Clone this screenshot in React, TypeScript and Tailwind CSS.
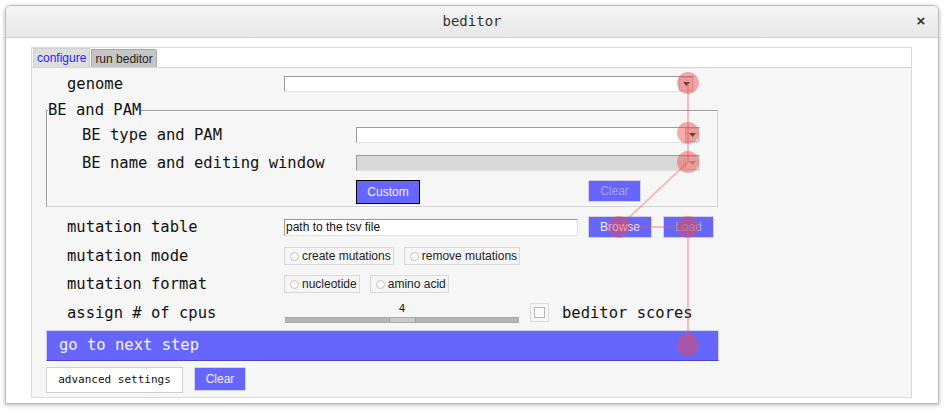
import React from "react";

const mono = "font-['DejaVu_Sans_Mono',monospace]";
const sans = "font-['Liberation_Sans',Arial,sans-serif]";

function Combo({ className, disabled }: { className: string; disabled?: boolean }) {
  return (
    <div
      className={`flex h-[16px] border border-t-[#9a9a9a] border-l-[#9a9a9a] border-b-[#e0e0e0] border-r-[#e0e0e0] ${
        disabled ? "bg-[#d9d9d9]" : "bg-white"
      } ${className}`}
    >
      <div className="flex-1" />
      <div className="flex w-[14px] items-center justify-center border border-[#c4c4c4] bg-[#e4e4e4]">
        <svg width="7" height="4" viewBox="0 0 7 4">
          <path d="M0 0h7L3.5 4z" fill={disabled ? "#a0a0a0" : "#222"} />
        </svg>
      </div>
    </div>
  );
}

function Btn({
  children,
  className,
  disabled,
  focus,
}: {
  children: React.ReactNode;
  className: string;
  disabled?: boolean;
  focus?: boolean;
}) {
  return (
    <div
      className={`flex items-center justify-center bg-[#6666ff] text-[12px] ${sans} border ${
        focus ? "border-black" : "border-[#d2d2e6]"
      } ${disabled ? "text-[#a6a6cc]" : "text-[#f0f0ff]"} ${className}`}
    >
      {children}
    </div>
  );
}

function Radio({ label }: { label: string }) {
  return (
    <div
      className={`flex h-[18px] items-center gap-[3px] border border-[#d9d9d9] pl-[5px] pr-[2px] text-[12px] text-[#222] ${sans}`}
    >
      <span className="h-[9px] w-[9px] rounded-full border border-[#c4c4c4] bg-[#fafafa]" />
      {label}
    </div>
  );
}

function Label({ children, className }: { children: React.ReactNode; className: string }) {
  return <div className={`${mono} text-[15.5px] leading-[18px] text-[#111] ${className}`}>{children}</div>;
}

export default function App() {
  return (
    <div className="relative h-[413px] w-[944px] overflow-hidden bg-white pl-[5px] pr-[5px] pt-[5px]">
      <div className="flex h-[399px] flex-col overflow-hidden rounded-t-[6px] border border-[#bcbcbc] bg-white shadow-[0_1px_4px_rgba(0,0,0,0.3)]">
        {/* title bar */}
        <div className="grid h-[32px] grid-cols-[40px_1fr_40px] items-center border-b border-[#cdcdcd] bg-gradient-to-b from-[#f5f5f5] to-[#e8e8e8]">
          <div />
          <div className={`${mono} text-center text-[14px] text-[#333]`}>beditor</div>
          <div className={`${sans} pl-[6px] text-center text-[15px] font-bold text-[#333]`}>×</div>
        </div>

        {/* body */}
        <div className="flex flex-1 flex-col pb-[5px] pl-[25px] pr-[26px] pt-[9px]">
          <div className="flex flex-1 flex-col border border-[#dadada]">
            {/* tabs */}
            <div className="flex h-[19px] items-end pl-[1px]">
              <div
                className={`${sans} flex h-[19px] items-center border border-b-0 border-[#cfcfcf] bg-[#dedede] px-[3px] text-[12px] text-[#2525ff]`}
              >
                configure
              </div>
              <div
                className={`${sans} ml-[1px] flex h-[18px] items-center rounded-tr-[3px] border border-b-0 border-[#a9a9a9] bg-[#c6c6c6] px-[3px] text-[12px] text-[#222]`}
              >
                run beditor
              </div>
            </div>

            {/* panel */}
            <div className="flex flex-1 flex-col border-t border-[#d6d6d6] bg-[#f6f6f6]">
              {/* genome */}
              <div className="mt-[8px] flex h-[16px] items-center">
                <Label className="w-[252px] pl-[35px]">genome</Label>
                <Combo className="w-[410px]" />
              </div>

              {/* BE and PAM */}
              <fieldset className="ml-[14px] mt-[10px] w-[672px] border border-t-[#9c9c9c] border-l-[#9c9c9c] border-b-[#d4d4d4] border-r-[#d4d4d4] pb-[2px] shadow-[inset_1px_1px_0_#ffffff]">
                <legend className={`${mono} ml-[1px] text-[15.5px] leading-[16px] text-[#111]`}>BE and PAM</legend>
                <div className="mt-[9px] flex h-[16px] items-center">
                  <Label className="w-[309px] pl-[35px]">BE type and PAM</Label>
                  <Combo className="w-[344px]" />
                </div>
                <div className="mt-[12px] flex h-[16px] items-center">
                  <Label className="w-[309px] pl-[35px]">BE name and editing window</Label>
                  <Combo className="w-[344px]" disabled />
                </div>
                <div className="mt-[9px] flex items-start">
                  <div className="w-[309px]" />
                  <Btn className="h-[24px] w-[64px]" focus>
                    Custom
                  </Btn>
                  <div className="w-[168px]" />
                  <Btn className="h-[22px] w-[53px]" disabled>
                    Clear
                  </Btn>
                </div>
              </fieldset>

              {/* mutation table */}
              <div className="mt-[9px] flex h-[22px] items-center">
                <Label className="w-[252px] pl-[35px]">mutation table</Label>
                <div
                  className={`${sans} flex h-[17px] w-[294px] items-center border border-t-[#9a9a9a] border-l-[#9a9a9a] border-b-[#e0e0e0] border-r-[#e0e0e0] bg-white pl-[1px] text-[12px] text-[#111]`}
                >
                  path to the tsv file
                </div>
                <Btn className="ml-[10px] h-[22px] w-[64px]">Browse</Btn>
                <Btn className="ml-[11px] h-[22px] w-[51px]" disabled>
                  Load
                </Btn>
              </div>

              {/* mutation mode */}
              <div className="mt-[9px] flex h-[18px] items-center">
                <Label className="w-[252px] pl-[35px]">mutation mode</Label>
                <div className="flex gap-[10px]">
                  <Radio label="create mutations" />
                  <Radio label="remove mutations" />
                </div>
              </div>

              {/* mutation format */}
              <div className="mt-[10px] flex h-[18px] items-center">
                <Label className="w-[252px] pl-[35px]">mutation format</Label>
                <div className="flex gap-[10px]">
                  <Radio label="nucleotide" />
                  <Radio label="amino acid" />
                </div>
              </div>

              {/* cpus */}
              <div className="mt-[9px] flex h-[21px] items-center">
                <Label className="w-[253px] pl-[35px]">assign # of cpus</Label>
                <div className="flex w-[234px] flex-col">
                  <div className={`${mono} h-[14px] text-center text-[11px] leading-[14px] text-[#222]`}>4</div>
                  <div className="mt-[1px] flex h-[6px] justify-center border border-[#a8a8a8] bg-[#b6b6b6]">
                    <div className="w-[27px] border-x border-[#9c9c9c] bg-[#c9c9c9]" />
                  </div>
                </div>
                <div className="ml-[11px] flex h-[19px] w-[19px] items-center justify-center border border-[#dcdcdc]">
                  <div className="h-[11px] w-[11px] border border-[#b4b4b4] bg-[#fafafa]" />
                </div>
                <Label className="ml-[13px]">beditor scores</Label>
              </div>

              {/* next step */}
              <div className="ml-[14px] mt-[7px] flex h-[31px] w-[673px] items-center border border-[#cfcfe6] border-b-[#4848c0] bg-[#6666ff] pl-[12px]">
                <span className={`${mono} text-[15.5px] text-[#f4f4ff]`}>go to next step</span>
              </div>

              {/* bottom buttons */}
              <div className="ml-[14px] mt-[6px] flex items-start gap-[11px]">
                <div
                  className={`${mono} flex h-[26px] w-[137px] items-center justify-center border border-[#d0d0d0] bg-white text-[11px] text-[#111]`}
                >
                  advanced settings
                </div>
                <Btn className="h-[24px] w-[52px]">Clear</Btn>
              </div>
            </div>
          </div>
        </div>
      </div>

      {/* tutorial overlay */}
      <svg className="pointer-events-none absolute left-0 top-0" width="944" height="413" viewBox="0 0 944 413">
        <polyline
          points="688,83 688,133 688,162 619,227 688,227 688,345"
          fill="none"
          stroke="rgba(240,80,80,0.35)"
          strokeWidth="2"
        />
        {[
          [688, 83],
          [688, 133],
          [688, 162],
          [619, 227],
          [688, 227],
          [688, 345],
        ].map(([cx, cy]) => (
          <circle key={`${cx}-${cy}`} cx={cx} cy={cy} r="11" fill="rgba(240,72,72,0.45)" />
        ))}
      </svg>
    </div>
  );
}
